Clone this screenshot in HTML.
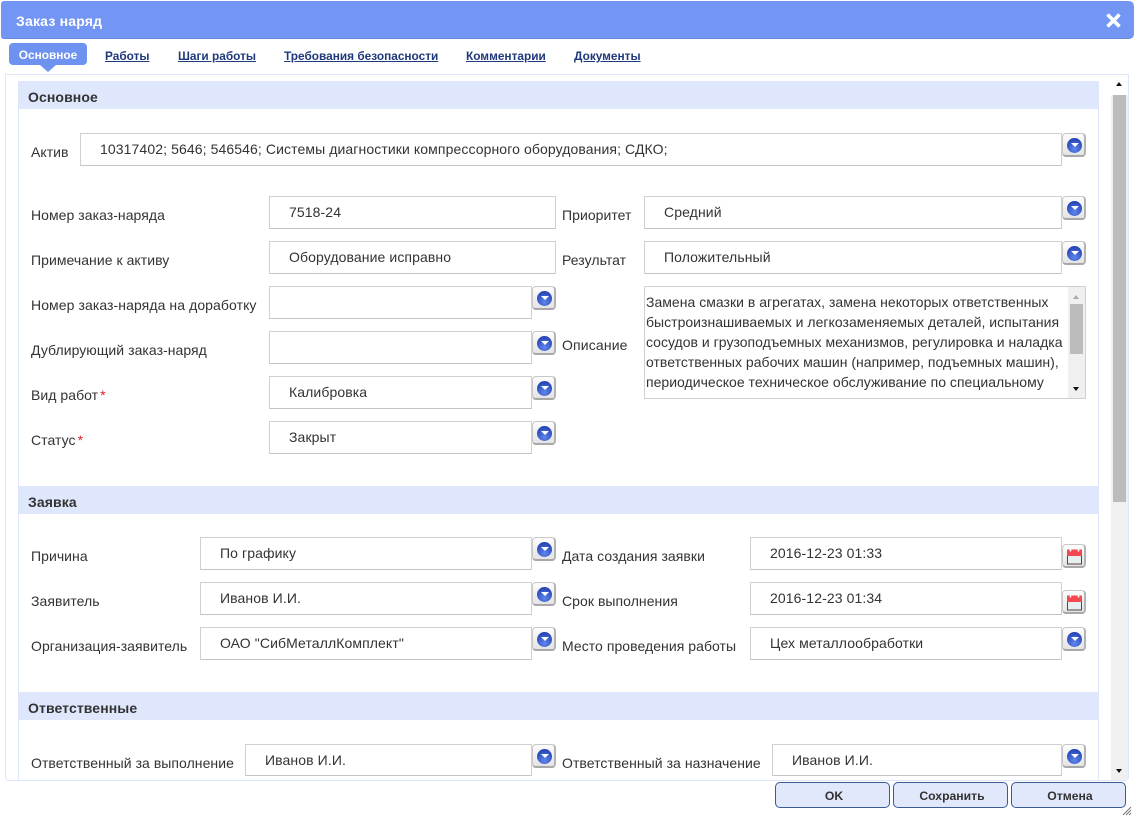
<!DOCTYPE html>
<html lang="ru"><head><meta charset="utf-8"><title>Заказ наряд</title>
<style>
html,body{margin:0;padding:0;background:#fff}
#p{position:relative;width:1135px;height:819px;overflow:hidden;background:#fff;font-family:"Liberation Sans",Arial,sans-serif;font-size:14px;color:#333}
#p div,#p a{position:absolute;box-sizing:border-box}
.l{white-space:nowrap;line-height:16px;color:#333;letter-spacing:.05px;margin-top:-1px}
.l i{font-style:normal;color:#e02020;margin-left:2px}
.f{height:33px;border:1px solid #d0d0d0;border-bottom-color:#c4c4c4;background:#fff;padding-left:19px;line-height:30px;white-space:nowrap;color:#333;letter-spacing:.1px}
.b{width:24px;height:24px;border:1px solid #c8c8c8;border-bottom:2px solid #a8a8a8;border-right:2px solid #b4b4b4;border-radius:4px;background:linear-gradient(#fdfdfd,#e4e4e4)}
.b b{position:absolute;left:4px;top:4px;width:15px;height:15px;border-radius:50%;background:radial-gradient(circle at 50% 75%,#5f86ea,#2a4abc 70%,#1f3b9c)}
.b b:after{content:"";position:absolute;left:3.5px;top:5px;border-left:4px solid transparent;border-right:4px solid transparent;border-top:4.5px solid #fff}
.c svg{position:absolute;left:3px;top:3px}
.h{left:19px;width:1080px;height:28px;background:#dfe7fd;font-weight:bold;font-size:14px;line-height:32px;padding-left:9px;color:#333;letter-spacing:.1px}
.t{top:48px;font-weight:bold;font-size:11.85px;color:#1f3a7a;text-decoration:underline;white-space:nowrap;line-height:16px}
.o{top:782px;height:26px;border:1px solid #3c5a96;border-radius:5px;background:#e1e8fb;text-align:center;font-weight:bold;font-size:12.2px;line-height:27px;color:#333;padding-left:3px}
</style></head><body><div id="p">

<div style="left:1px;top:1px;width:1133px;height:38px;background:#7396f5;border-radius:3px 5px 5px 3px;border-bottom:1px solid #6686de"></div>
<div style="left:16px;top:12px;color:#fff;font-weight:bold;font-size:14px;line-height:18px;white-space:nowrap;letter-spacing:.2px">Заказ наряд</div>
<svg style="position:absolute;left:1106px;top:13px" width="15" height="15" viewBox="0 0 15 15"><path d="M1.5 1.5L13.5 13.5M13.5 1.5L1.5 13.5" stroke="#fff" stroke-width="3.6"/></svg>

<div style="left:9px;top:43px;width:78px;height:22px;background:#6e92f0;border-radius:4px;color:#fff;font-weight:bold;font-size:11.85px;line-height:25px;text-align:center">Основное</div>
<div style="left:40px;top:65px;width:0;height:0;border-left:8px solid transparent;border-right:8px solid transparent;border-top:7px solid #6e92f0"></div>
<a class="t" style="left:105px">Работы</a>
<a class="t" style="left:178px">Шаги работы</a>
<a class="t" style="left:284px">Требования безопасности</a>
<a class="t" style="left:466px">Комментарии</a>
<a class="t" style="left:574px">Документы</a>

<div style="left:5px;top:74px;width:1124px;height:707px;border:1px solid #dde6fb;border-radius:0 0 4px 4px;background:#fff"></div>
<div style="left:18px;top:81px;width:1081px;height:699px;border-left:1px solid #dde6fb;border-right:1px solid #dde6fb"></div>

<div class="h" style="top:81px">Основное</div>
<div class="h" style="top:486px">Заявка</div>
<div class="h" style="top:692px">Ответственные</div>

<div style="left:1111px;top:75px;width:17px;height:705px;background:#f0f0f0"></div>
<div style="left:1111px;top:75px;width:17px;height:20px;background:#fff"></div>
<div style="left:1113px;top:95px;width:13px;height:407px;background:#bcbcbc"></div>
<div style="left:1116px;top:82px;border-left:3.5px solid transparent;border-right:3.5px solid transparent;border-bottom:4px solid #111;width:0;height:0"></div>
<div style="left:1116px;top:769px;border-left:3.5px solid transparent;border-right:3.5px solid transparent;border-top:4px solid #111;width:0;height:0"></div>

<div class="l" style="left:31px;top:145px">Актив</div>
<div class="f" style="left:80px;top:133px;width:982px">10317402; 5646; 546546; Системы диагностики компрессорного оборудования; СДКО;</div>
<div class="b" style="left:1062px;top:133px"><b></b></div>

<div class="l" style="left:31px;top:208px">Номер заказ-наряда</div>
<div class="f" style="left:269px;top:196px;width:287px">7518-24</div>
<div class="l" style="left:562px;top:208px">Приоритет</div>
<div class="f" style="left:644px;top:196px;width:418px">Средний</div>
<div class="b" style="left:1062px;top:196px"><b></b></div>

<div class="l" style="left:31px;top:253px">Примечание к активу</div>
<div class="f" style="left:269px;top:241px;width:287px">Оборудование исправно</div>
<div class="l" style="left:562px;top:253px">Результат</div>
<div class="f" style="left:644px;top:241px;width:418px">Положительный</div>
<div class="b" style="left:1062px;top:241px"><b></b></div>

<div class="l" style="left:31px;top:298px;letter-spacing:.08px">Номер заказ-наряда на доработку</div>
<div class="f" style="left:269px;top:286px;width:263px"></div>
<div class="b" style="left:532px;top:286px"><b></b></div>

<div class="l" style="left:31px;top:343px">Дублирующий заказ-наряд</div>
<div class="f" style="left:269px;top:331px;width:263px"></div>
<div class="b" style="left:532px;top:331px"><b></b></div>
<div class="l" style="left:562px;top:338px;letter-spacing:.15px">Описание</div>

<div style="left:644px;top:286px;width:442px;height:113px;border:1px solid #d0d0d0;background:#fff"></div>
<div class="l" style="left:646px;top:293px;line-height:20px;color:#333;letter-spacing:.02px">Замена смазки в агрегатах, замена некоторых ответственных<br>быстроизнашиваемых и легкозаменяемых деталей, испытания<br>сосудов и грузоподъемных механизмов, регулировка и наладка<br>ответственных рабочих машин (например, подъемных машин),<br>периодическое техническое обслуживание по специальному</div>
<div style="left:1068px;top:287px;width:17px;height:111px;background:#f0f0f0"></div>
<div style="left:1070px;top:304px;width:13px;height:50px;background:#bcbcbc"></div>
<div style="left:1073px;top:295px;border-left:3.5px solid transparent;border-right:3.5px solid transparent;border-bottom:4px solid #aaa;width:0;height:0"></div>
<div style="left:1073px;top:387px;border-left:3.5px solid transparent;border-right:3.5px solid transparent;border-top:4px solid #111;width:0;height:0"></div>

<div class="l" style="left:31px;top:388px">Вид работ<i>*</i></div>
<div class="f" style="left:269px;top:376px;width:263px">Калибровка</div>
<div class="b" style="left:532px;top:376px"><b></b></div>

<div class="l" style="left:31px;top:433px">Статус<i>*</i></div>
<div class="f" style="left:269px;top:421px;width:263px">Закрыт</div>
<div class="b" style="left:532px;top:421px"><b></b></div>

<div class="l" style="left:31px;top:549px">Причина</div>
<div class="f" style="left:200px;top:537px;width:332px">По графику</div>
<div class="b" style="left:532px;top:537px"><b></b></div>
<div class="l" style="left:562px;top:549px">Дата создания заявки</div>
<div class="f" style="left:750px;top:537px;width:312px">2016-12-23 01:33</div>
<div class="b c" style="left:1062px;top:544px"><svg width="17" height="18" viewBox="0 0 17 18"><rect x="1.5" y="2.5" width="14" height="13.5" fill="#e6f0f0" stroke="#5a4040"/><rect x="1" y="1.5" width="15" height="6.5" fill="#f04a50"/><path d="M4.5 .5v3M12.5 .5v3" stroke="#fff" stroke-width="1.5"/></svg></div>

<div class="l" style="left:31px;top:594px">Заявитель</div>
<div class="f" style="left:200px;top:582px;width:332px">Иванов И.И.</div>
<div class="b" style="left:532px;top:582px"><b></b></div>
<div class="l" style="left:562px;top:594px">Срок выполнения</div>
<div class="f" style="left:750px;top:582px;width:312px">2016-12-23 01:34</div>
<div class="b c" style="left:1062px;top:590px"><svg width="17" height="18" viewBox="0 0 17 18"><rect x="1.5" y="2.5" width="14" height="13.5" fill="#e6f0f0" stroke="#5a4040"/><rect x="1" y="1.5" width="15" height="6.5" fill="#f04a50"/><path d="M4.5 .5v3M12.5 .5v3" stroke="#fff" stroke-width="1.5"/></svg></div>

<div class="l" style="left:31px;top:639px">Организация-заявитель</div>
<div class="f" style="left:200px;top:627px;width:332px">ОАО "СибМеталлКомплект"</div>
<div class="b" style="left:532px;top:627px"><b></b></div>
<div class="l" style="left:562px;top:639px">Место проведения работы</div>
<div class="f" style="left:750px;top:627px;width:312px">Цех металлообработки</div>
<div class="b" style="left:1062px;top:627px"><b></b></div>

<div class="l" style="left:31px;top:756px">Ответственный за выполнение</div>
<div class="f" style="left:245px;top:744px;width:287px;height:32px">Иванов И.И.</div>
<div class="b" style="left:532px;top:744px"><b></b></div>
<div class="l" style="left:562px;top:756px">Ответственный за назначение</div>
<div class="f" style="left:772px;top:744px;width:290px;height:32px">Иванов И.И.</div>
<div class="b" style="left:1062px;top:744px"><b></b></div>

<div class="o" style="left:775px;width:115px">OK</div>
<div class="o" style="left:893px;width:115px">Сохранить</div>
<div class="o" style="left:1011px;width:115px">Отмена</div>
<svg style="position:absolute;left:1122px;top:806px" width="10" height="10" viewBox="0 0 10 10"><path d="M9 1L1 9M9 4L4 9M9 7L7 9" stroke="#777" stroke-width="1"/></svg>
</div></body></html>
